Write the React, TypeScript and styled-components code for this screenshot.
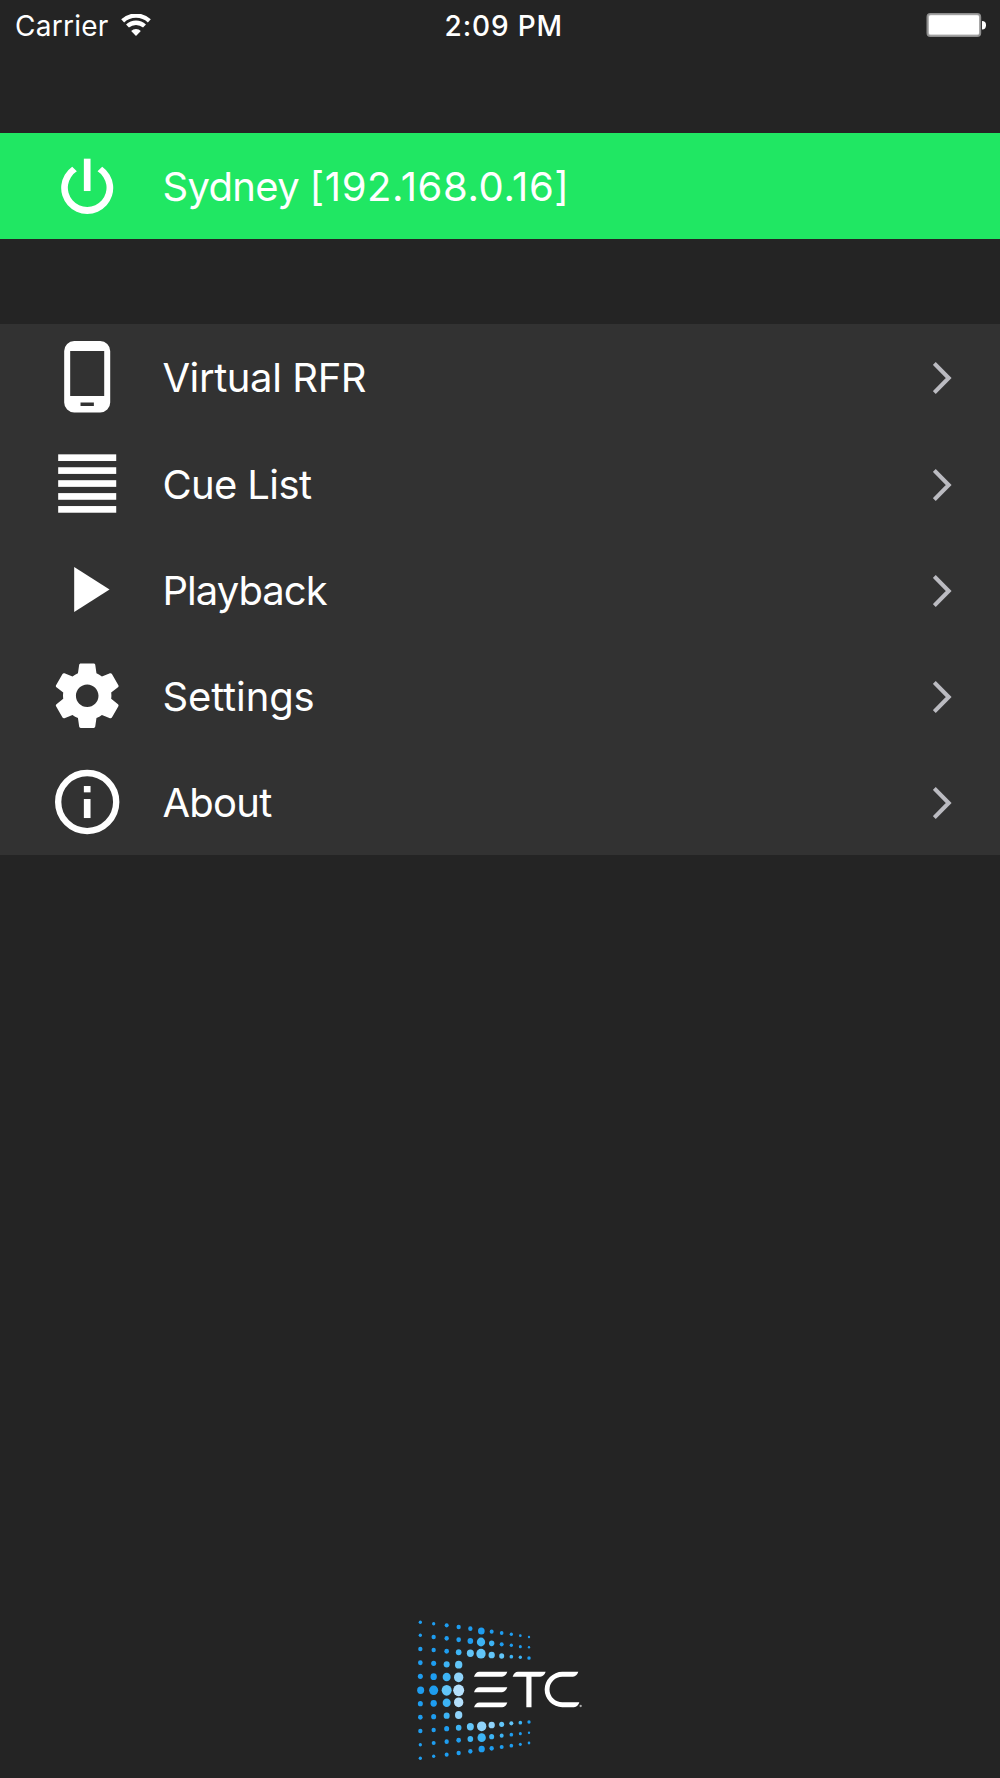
import React from 'react';
import styled, { createGlobalStyle } from 'styled-components';

const GlobalStyle = createGlobalStyle`
  *, *::before, *::after { box-sizing: border-box; }
  body {
    margin: 0;
    background: #242424;
    color: #fff;
    font-family: Inter, Roboto, "Liberation Sans", sans-serif;
  }
`;

const Screen = styled.div`
  display: flex;
  flex-direction: column;
  height: 1778px;
  background: #242424;
  overflow: hidden;
`;

const StatusBar = styled.header`
  display: grid;
  grid-template-columns: 1fr auto 1fr;
  align-items: center;
  height: 50px;
  padding: 0 14.5px 0 15px;
  font-size: 28px;
  line-height: 34px;
`;

const Carrier = styled.div`
  display: flex;
  align-items: center;
  gap: 12px;
  letter-spacing: 0.25px;
`;

const CarrierName = styled.span`
  padding-top: 2px;
`;

const Time = styled.time`
  padding: 2px 0 0 7px;
  font-weight: 550;
  letter-spacing: 0.85px;
`;

const BatterySlot = styled.div`
  display: flex;
  justify-content: flex-end;
`;

const Row = styled.div`
  display: flex;
  align-items: center;
  height: 106.2px;
  padding: 0 47.5px 0 48px;
`;

const ConnectionRow = styled(Row)`
  margin-top: 83px;
  background: #20e763;
`;

const Menu = styled.nav`
  margin-top: 84.8px;
  background: #323232;
`;

const RowIcon = styled.svg`
  flex: none;
  width: 77.4px;
  height: 77.4px;
  fill: #fff;
`;

const Label = styled.span<{ $tracking: number }>`
  flex: 1;
  margin-left: 37px;
  padding-top: 2.8px;
  font-size: 40px;
  font-weight: 380;
  line-height: 48px;
  white-space: nowrap;
  letter-spacing: ${(p) => p.$tracking}px;
`;

const Address = styled.span`
  letter-spacing: 0.6px;
`;

const Chevron = styled.svg`
  flex: none;
  width: 20px;
  height: 34px;
  margin-top: 2.6px;
  fill: none;
  stroke: #bbbbc1;
  stroke-width: 4.1;
`;

const Footer = styled.footer`
  display: flex;
  justify-content: center;
  margin-top: auto;
`;

type IconName = 'power' | 'phone' | 'list' | 'play' | 'gear' | 'info';

const icons: Record<IconName, React.ReactNode> = {
  power: (
    <>
      <rect x="-10" y="-81" width="20" height="97" />
      <path d="M-45-57A78 78 0 1 0 45-57L31-43A58 58 0 1 1-31-43Z" />
    </>
  ),
  phone: (
    <path
      fillRule="evenodd"
      d="M-39-107H39A30 30 0 0 1 69-77V77A30 30 0 0 1 39 107H-39A30 30 0 0 1-69 77V-77A30 30 0 0 1-39-107ZM-51-77V58H51V-77ZM-20 77V88H20V77Z"
    />
  ),
  list: (
    <>
      {[-88, -49.3, -10.5, 28.2, 67].map((y) => (
        <rect key={y} x="-87" y={y} width="174" height="20" />
      ))}
    </>
  ),
  play: <path d="M-39-68 67-.5-39 67Z" />,
  gear: (
    <path
      transform="translate(-116 -116) scale(9.67)"
      d="M19.43 12.98c.04-.32.07-.64.07-.98s-.03-.66-.07-.98l2.11-1.65c.19-.15.24-.42.12-.64l-2-3.46c-.12-.22-.39-.3-.61-.22l-2.49 1c-.52-.4-1.08-.73-1.69-.98l-.38-2.65C14.46 2.18 14.25 2 14 2h-4c-.25 0-.46.18-.49.42l-.38 2.65c-.61.25-1.17.59-1.69.98l-2.49-1c-.23-.09-.49 0-.61.22l-2 3.46c-.13.22-.07.49.12.64l2.11 1.65c-.04.32-.07.65-.07.98s.03.66.07.98l-2.11 1.65c-.19.15-.24.42-.12.64l2 3.46c.12.22.39.3.61.22l2.49-1c.52.4 1.08.73 1.69.98l.38 2.65c.03.24.24.42.49.42h4c.25 0 .46-.18.49-.42l.38-2.65c.61-.25 1.17-.59 1.69-.98l2.49 1c.23.09.49 0 .61-.22l2-3.46c.12-.22.07-.49-.12-.64l-2.11-1.65zM12 15.5c-1.93 0-3.5-1.57-3.5-3.5s1.57-3.5 3.5-3.5 3.5 1.57 3.5 3.5-1.57 3.5-3.5 3.5z"
    />
  ),
  info: (
    <>
      <circle cy="1" r="87" fill="none" stroke="#fff" strokeWidth="19" />
      <rect x="-10" y="-47" width="20" height="19" />
      <rect x="-10" y="-8" width="20" height="57" />
    </>
  ),
};

const Icon = ({ name }: { name: IconName }) => (
  <RowIcon viewBox="-117.5 -116 232 232" aria-hidden="true">
    {icons[name]}
  </RowIcon>
);

const menu: { icon: IconName; label: string; tracking: number }[] = [
  { icon: 'phone', label: 'Virtual RFR', tracking: -0.4 },
  { icon: 'list', label: 'Cue List', tracking: -0.62 },
  { icon: 'play', label: 'Playback', tracking: -0.95 },
  { icon: 'gear', label: 'Settings', tracking: -0.12 },
  { icon: 'info', label: 'About', tracking: -0.7 },
];

const Wifi = () => (
  <svg width="30" height="23" viewBox="0 0 90 69" aria-hidden="true">
    <g fill="none" stroke="#fff" strokeWidth="13">
      <path d="M5 20.5A59 59 0 0 1 85 20.5" />
      <path d="M19.5 36A38 38 0 0 1 70.5 36" />
    </g>
    <path d="M45 66 30.5 51A21 21 0 0 1 59.5 51Z" fill="#fff" />
  </svg>
);

const Battery = () => (
  <svg width="60" height="24" viewBox="0 0 60 24" aria-hidden="true">
    <rect x="1.25" y="0.75" width="53.2" height="22.5" rx="3.2" fill="#b4b4b4" stroke="#8e8e8e" strokeWidth="1.5" />
    <rect x="3" y="2.2" width="50" height="19.4" rx="1.6" fill="#fff" />
    <path d="M56 8A4 4.2 0 0 1 56 16.4Z" fill="#fff" />
  </svg>
);

// One entry per dot: x, y, radius, colour.
const B = '#1e9df0';
const M = '#3db4f5';
const L = '#62c5f8';
const P = '#8fd3fa';
const W = '#b5e0fc';
type Dot = [number, number, number, string];
const dots: Dot[] = [
  [61, 67, 5, B], [61, 106, 5, B], [61, 147, 6.5, B], [61, 188, 7, B], [61, 229, 7.5, B], [62, 271, 10.5, B],
  [61, 311, 7.5, B], [61, 352, 7, B], [61, 393, 6.5, B], [61, 434, 5, B], [61, 475, 5, B],
  [101, 71, 5, B], [101, 111, 6.5, B], [101, 150, 6.5, B], [101, 190, 7.5, B], [101, 230, 9.5, B], [101, 271, 13.5, B],
  [101, 310, 9.5, B], [101, 350, 7.5, B], [101, 390, 6.5, B], [101, 429, 6, B], [101, 469, 5, B],
  [140, 76, 6, B], [140, 115, 6.5, B], [140, 154, 7, B], [140, 193, 9, M], [140, 231, 12, M], [140, 271, 15, L],
  [140, 308, 12, M], [140, 347, 9, M], [140, 386, 7.5, B], [140, 425, 6.5, B], [140, 464, 6, B],
  [176, 81, 6.5, B], [176, 119, 7, B], [176, 157, 8.5, M], [176, 194, 11, L], [176, 232, 14, P], [176, 271, 16.5, W],
  [176, 307, 14, W], [176, 345, 11, P], [176, 383, 8.5, M], [176, 421, 7, B], [176, 459, 6.5, B],
  [211, 86, 6.5, B], [211, 123, 8.5, B], [211, 160, 10.5, L], [211, 380, 10.5, L], [211, 417, 8.5, M], [211, 454, 6.5, B],
  [244, 93, 10, B], [243, 126, 12.5, M], [243, 161, 14, L], [245, 379, 14, P], [245, 413, 12.5, M], [245, 447, 9.5, B],
  [275, 95, 6, B], [275, 130, 8, M], [275, 165, 9.5, L], [275, 375, 9.5, P], [275, 410, 7.5, M], [275, 445, 6.5, B],
  [305, 99, 5.5, B], [305, 133, 6, B], [305, 168, 7.5, L], [305, 373, 7.5, L], [305, 407, 6, M], [305, 441, 6, B],
  [334, 103, 5, B], [334, 136, 5, B], [334, 170, 5.5, M], [334, 370, 6, L], [334, 404, 5.5, B], [334, 437, 5.5, B],
  [361, 107, 4, B], [361, 140, 4.5, B], [361, 172, 5, M], [361, 368, 5.5, M], [361, 401, 4.5, B], [361, 433, 4.5, B],
  [387, 111, 3.5, B], [387, 142, 3.5, B], [387, 174, 5.2, B], [387, 366, 5, B], [387, 398, 3.5, B], [387, 429, 4, B],
];

const Logo = () => (
  <svg width="200" height="178" viewBox="0 0 600 534" role="img" aria-label="ETC">
    {dots.map(([x, y, r, fill]) => (
      <ellipse key={`${x}-${y}`} cx={x} cy={y} rx={r} ry={r * 1.06} fill={fill} />
    ))}
    <g fill="#fff">
      {[215.5, 262, 307.5].map((y) => (
        <path key={y} d={`M222 ${y + 14.5}Q227 ${y} 238 ${y}H322Q317 ${y + 14.5} 306 ${y + 14.5}Z`} />
      ))}
      <path d="M338 230Q343 215.5 354 215.5H437Q432 230 421 230H394.5V321.5H379V230Z" />
      <path d="M535 215.5Q530 230 519 230H487A38.5 38.5 0 0 0 487 307H538Q534 321.5 522 321.5H487A53 53 0 0 1 487 215.5Z" />
      <circle cx="542" cy="318" r="3.5" fill="#aaa" />
    </g>
  </svg>
);

export default function App() {
  return (
    <Screen>
      <GlobalStyle />
      <StatusBar>
        <Carrier>
          <CarrierName>Carrier</CarrierName>
          <Wifi />
        </Carrier>
        <Time>2:09 PM</Time>
        <BatterySlot>
          <Battery />
        </BatterySlot>
      </StatusBar>
      <ConnectionRow>
        <Icon name="power" />
        <Label $tracking={-0.65}>
          Sydney <Address>[192.168.0.16]</Address>
        </Label>
      </ConnectionRow>
      <Menu>
        {menu.map((item) => (
          <Row key={item.label}>
            <Icon name={item.icon} />
            <Label $tracking={item.tracking}>{item.label}</Label>
            <Chevron viewBox="0 0 20 34" aria-hidden="true">
              <path d="M1.3 2.5 15.7 17 1.3 31.5" />
            </Chevron>
          </Row>
        ))}
      </Menu>
      <Footer>
        <Logo />
      </Footer>
    </Screen>
  );
}
